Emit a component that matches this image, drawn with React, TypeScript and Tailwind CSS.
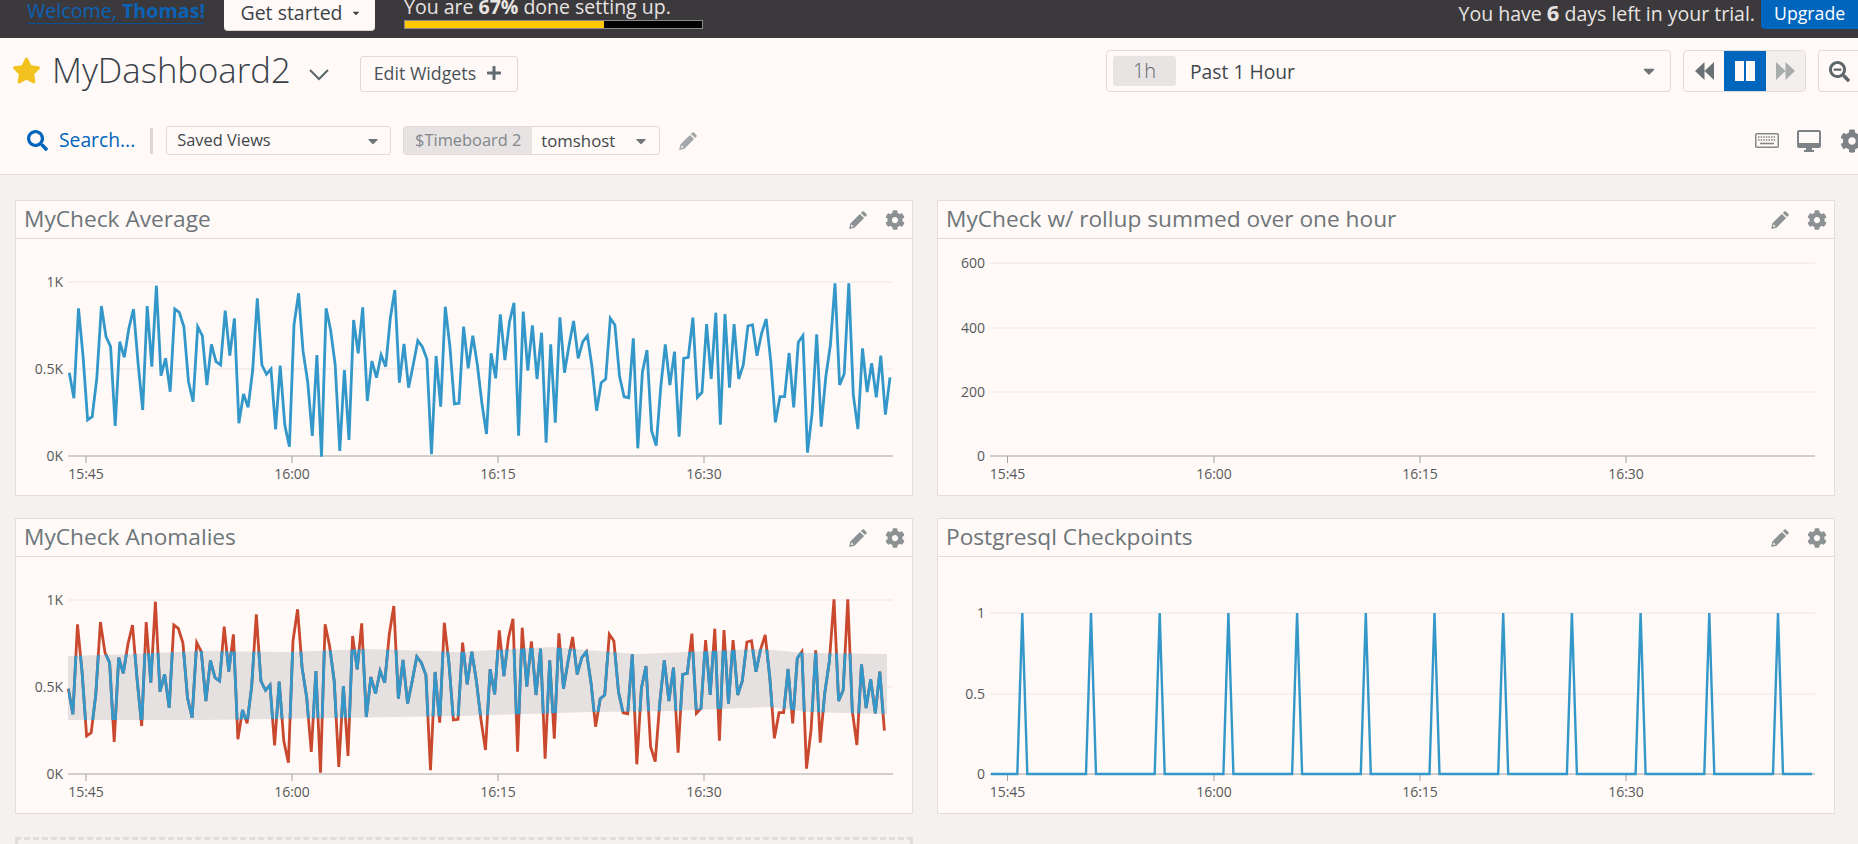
import { FaCaretDown, FaCog, FaPlus, FaSearch, FaSearchMinus, FaStar } from "react-icons/fa";

// y values of the metric, read in thirds of a pixel from the panel top offset
const metric = [
  548, 625, 355, 500, 690, 680, 565, 348, 440, 470, 708, 455, 502, 415, 357, 520, 660, 348, 530, 287, 557, 505, 605,
  357, 367, 410, 575, 635, 410, 437, 585, 463, 515, 525, 362, 497, 385, 700, 612, 652, 540, 325, 525, 553, 537, 718,
  527, 705, 770, 405, 310, 485, 575, 738, 495, 800, 355, 420, 525, 783, 540, 750, 390, 490, 352, 633, 513, 563, 495,
  530, 385, 300, 578, 462, 593, 525, 452, 470, 507, 793, 498, 650, 350, 470, 642, 640, 410, 535, 437, 525, 640, 732,
  490, 565, 373, 510, 395, 338, 737, 365, 542, 406, 567, 428, 758, 463, 698, 382, 548, 465, 393, 505, 455, 437, 530,
  662, 578, 567, 385, 405, 558, 620, 623, 445, 775, 547, 480, 722, 767, 590, 463, 585, 485, 740, 505, 502, 383, 622,
  607, 402, 567, 368, 704, 372, 593, 402, 567, 525, 408, 404, 497, 430, 387, 515, 697, 620, 620, 489, 652, 457, 437,
  788, 670, 433, 710, 560, 465, 280, 585, 552, 280, 615, 717, 475, 606, 520, 622, 497, 674, 562,
];

const bandTop: [number, number][] = [
  [68, 656], [133, 654], [200, 651], [287, 652], [367, 649], [460, 652], [550, 647], [637, 654], [760, 649], [807, 653], [887, 654],
];
const bandBottom: [number, number][] = [
  [887, 714], [807, 712], [770, 707], [743, 708], [673, 711], [593, 712], [460, 716], [200, 720], [68, 720],
];
const bandPoints = [...bandTop, ...bandBottom].map(([x, y]) => `${x},${y}`).join(" ");

function metricPoints(dx: number, dy: number, values: number[]) {
  return values.map((y, i) => `${(69.3 + i * 4.585 + dx).toFixed(1)},${(190 + y / 3 + dy).toFixed(1)}`).join(" ");
}

const spikes = Array.from({ length: 12 }, (_, i) => 1022.3 + i * 68.7);
const spikePoints = [
  "991,774",
  ...spikes.flatMap((x) => [`${x - 5},774`, `${x},613`, `${x + 5},774`]),
  "1812,774",
].join(" ");

function Axis({
  x1,
  x2,
  ticks,
  base,
  grid,
}: {
  x1: number;
  x2: number;
  ticks: number[];
  base: number;
  grid: { y: number; label: string }[];
}) {
  const times = ["15:45", "16:00", "16:15", "16:30"];
  return (
    <g className="text-[14px]" fontFamily="'Open Sans', sans-serif">
      {grid.map((g) => (
        <g key={g.label}>
          <line x1={x1} x2={x2} y1={g.y} y2={g.y} stroke={g.y === base ? "#a3a3a3" : "#ebe6e4"} strokeWidth={1} />
          <text x={x1 - 5} y={g.y + 5} textAnchor="end" fill="#56595b">
            {g.label}
          </text>
        </g>
      ))}
      {ticks.map((x, i) => (
        <g key={x}>
          <line x1={x} x2={x} y1={base} y2={base + 7} stroke="#a3a3a3" />
          <text x={x} y={base + 23} textAnchor="middle" fill="#56595b">
            {times[i]}
          </text>
        </g>
      ))}
    </g>
  );
}

function Pencil({ className }: { className: string }) {
  return (
    <svg viewBox="0 0 20 20" className={className} fill="currentColor">
      <path d="M14.2 1.6a1.2 1.2 0 0 1 1.7 0l2.5 2.5a1.2 1.2 0 0 1 0 1.7l-1.3 1.3-4.2-4.2zM11.9 3.9l4.2 4.2L6.5 17.7l-5.3 1.2 1.1-5.4zM3.6 14.3l-.6 2.7 2.7-.6z" fillRule="evenodd" />
    </svg>
  );
}

function DoubleArrow({ className, flip }: { className: string; flip?: boolean }) {
  return (
    <svg viewBox="0 0 19 18" className={className} fill="currentColor">
      <path d={flip ? "M0 0l9.5 9L0 18zM9.5 0L19 9l-9.5 9z" : "M19 0L9.5 9l9.5 9zM9.5 0L0 9l9.5 9z"} />
    </svg>
  );
}

function Keyboard({ className }: { className: string }) {
  return (
    <svg viewBox="0 0 24 15" className={className}>
      <rect x="0.75" y="0.75" width="22.5" height="13.5" rx="1" fill="none" stroke="currentColor" strokeWidth="1.5" />
      <path d="M3 4h18M3 7h18" stroke="currentColor" strokeWidth="1.6" strokeDasharray="1.6 1" fill="none" />
      <path d="M5 10.5h14" stroke="currentColor" strokeWidth="1.6" fill="none" />
    </svg>
  );
}

function Monitor({ className }: { className: string }) {
  return (
    <svg viewBox="0 0 24 22" className={className} fill="currentColor">
      <path d="M2 0h20a2 2 0 0 1 2 2v14a2 2 0 0 1-2 2h-7v2h2v2H7v-2h2v-2H2a2 2 0 0 1-2-2V2a2 2 0 0 1 2-2zM2 2v11h20V2z" fillRule="evenodd" />
    </svg>
  );
}

function Panel({ title, viewBox, children }: { title: string; viewBox: string; children: React.ReactNode }) {
  return (
    <section className="h-[296px] border border-[#e2dedd] bg-[#fffaf7]">
      <header className="flex h-[38px] items-center justify-between border-b border-[#e0dbdd] pl-[8px] pr-[7px]">
        <h2 className="text-[22.7px] text-[#6d757a]">{title}</h2>
        <div className="flex items-center gap-[17px] text-[#8c9193]">
          <Pencil className="h-[20px] w-[20px]" />
          <FaCog className="h-[20px] w-[20px]" />
        </div>
      </header>
      <svg viewBox={viewBox} className="block h-[256px] w-full">
        {children}
      </svg>
    </section>
  );
}

export default function App() {
  return (
    <div className="h-[844px] w-full overflow-hidden bg-[#f5f1ee] font-['Open_Sans',sans-serif]">
      <div className="flex h-[38px] items-start overflow-hidden bg-[#3b393c] text-[#e8e4e2]">
        <a className="ml-[27px] mt-[-2px] block h-[26px] w-[177px] whitespace-nowrap border-b border-[#0a4f92] text-[19.7px] leading-[26px] text-[#0b62b4]">
          Welcome, <b>Thomas!</b>
        </a>
        <button className="ml-[20px] flex h-[31px] w-[151px] items-center justify-center gap-[8px] rounded-b-[4px] border-b border-[#d8d4d3] bg-[#fffaf7] pb-[4px] pl-[2px] text-[19.5px] text-[#3b4247]">
          Get started
          <FaCaretDown className="h-[10px] w-[10px]" />
        </button>
        <div className="ml-[29px] w-[299px]">
          <p className="mt-[-6px] h-[26px] whitespace-nowrap text-[19.5px] leading-[26px]">
            You are <b>67%</b> done setting up.
          </p>
          <div className="h-[9px] border border-[#8a8a8a] bg-black">
            <div className="h-full w-[67%] bg-[#ffc800]" />
          </div>
        </div>
        <p className="ml-auto mt-[-1px] whitespace-nowrap text-[19.5px] leading-[26px]">
          You have <b className="text-[22px]">6</b> days left in your trial.
        </p>
        <button className="ml-[6px] h-[29px] w-[97px] rounded-bl-[4px] bg-[#0065bd] pb-[4px] pl-[13px] text-left text-[17.7px] text-white">
          Upgrade
        </button>
      </div>

      <div className="h-[137px] border-b border-[#e3dedd] bg-[#fffaf7]">
        <div className="flex h-[54px] items-end">
          <FaStar className="mb-[8px] ml-[12px] h-[27px] w-[29px] text-[#f2c31f]" />
          <h1 className="ml-[11px] whitespace-nowrap text-[34.7px] font-light leading-[44px] text-[#394249]">MyDashboard2</h1>
          <svg viewBox="0 0 20 12" className="mb-[11px] ml-[18px] h-[12px] w-[20px] text-[#59636a]" fill="none" stroke="currentColor" strokeWidth="2">
            <path d="M1 1l9 9 9-9" />
          </svg>
          <button className="ml-[31px] flex h-[36px] w-[158px] items-center gap-[10px] whitespace-nowrap rounded-[3px] border border-[#dedad9] pb-[2px] pl-[13px] text-[17.8px] text-[#4a5257]">
            Edit Widgets
            <FaPlus className="h-[16px] w-[16px] shrink-0 text-[#646b70]" />
          </button>
          <div className="ml-auto flex h-[42px] w-[565px] items-center rounded-[4px] border border-[#e0dbda] pl-[6px] pr-[12px]">
            <span className="flex h-[30px] w-[63px] items-center justify-center rounded-[3px] bg-[#e8e4e3] text-[20px] font-light text-[#5d666b]">
              1h
            </span>
            <span className="ml-[14px] pt-[2px] text-[19.3px] text-[#3f474c]">Past 1 Hour</span>
            <FaCaretDown className="ml-auto h-[18px] w-[18px] text-[#6e7478]" />
          </div>
          <div className="ml-[12px] flex h-[42px] w-[123px] overflow-hidden rounded-[4px] border border-[#e0dbda]">
            <span className="flex w-[40px] items-center justify-center text-[#6b7275]">
              <DoubleArrow className="h-[18px] w-[19px]" />
            </span>
            <span className="flex w-[42px] items-center justify-center gap-[2px] bg-[#0065bd]">
              <span className="h-[20px] w-[9px] bg-[#fffaf7]" />
              <span className="h-[20px] w-[9px] bg-[#fffaf7]" />
            </span>
            <span className="flex flex-1 items-center justify-center bg-[#f3efed] text-[#a9acad]">
              <DoubleArrow flip className="h-[18px] w-[19px]" />
            </span>
          </div>
          <div className="ml-[12px] flex h-[42px] w-[40px] items-center rounded-l-[4px] border border-r-0 border-[#e0dbda] pl-[10px]">
            <FaSearchMinus className="h-[21px] w-[21px] text-[#5d666b]" />
          </div>
        </div>
        <div className="mt-[34px] flex h-[29px] items-center">
          <FaSearch className="ml-[27px] h-[21px] w-[21px] text-[#0065bd]" />
          <span className="ml-[11px] whitespace-nowrap text-[19.3px] text-[#0065bd]">Search...</span>
          <span className="ml-[15px] h-[26px] w-[3px] bg-[#dcd8d7]" />
          <div className="ml-[13px] flex h-[29px] w-[225px] items-center justify-between rounded-[3px] border border-[#e0dbda] pl-[10px] pr-[9px] text-[16.4px] text-[#3f474c]">
            Saved Views
            <FaCaretDown className="h-[16px] w-[16px] text-[#6e7478]" />
          </div>
          <div className="ml-[12px] flex h-[29px] w-[257px] overflow-hidden rounded-[3px] border border-[#e0dbda] text-[16.4px]">
            <span className="flex w-[128px] items-center justify-center whitespace-nowrap bg-[#e7e3e3] text-[#81878a]">$Timeboard 2</span>
            <span className="flex flex-1 items-center justify-between pl-[9px] pr-[10px] text-[16.8px] text-[#3f474c]">
              tomshost
              <FaCaretDown className="h-[16px] w-[16px] text-[#6e7478]" />
            </span>
          </div>
          <Pencil className="ml-[18px] h-[20px] w-[20px] text-[#a3a7a9]" />
          <Keyboard className="ml-auto h-[15px] w-[24px] text-[#85898b]" />
          <Monitor className="ml-[18px] h-[22px] w-[24px] text-[#7c8285]" />
          <FaCog className="ml-[19px] mr-[-6px] h-[24px] w-[24px] shrink-0 text-[#7c8285]" />
        </div>
      </div>

      <main className="grid grid-cols-[898px_898px] gap-x-[24px] gap-y-[22px] pl-[15px] pt-[25px]">
        <Panel title="MyCheck Average" viewBox="16 239 896 256">
          <Axis x1={68} x2={893} base={456} ticks={[86, 292, 498, 704]} grid={[{ y: 282, label: "1K" }, { y: 369, label: "0.5K" }, { y: 456, label: "0K" }]} />
          <polyline points={metricPoints(0, 0, metric)} fill="none" stroke="#3397c9" strokeWidth={2.8} />
        </Panel>
        <Panel title="MyCheck w/ rollup summed over one hour" viewBox="938 239 896 256">
          <Axis x1={990} x2={1815} base={456} ticks={[1007.5, 1214, 1420, 1626]} grid={[{ y: 263, label: "600" }, { y: 328, label: "400" }, { y: 392, label: "200" }, { y: 456, label: "0" }]} />
        </Panel>
        <Panel title="MyCheck Anomalies" viewBox="16 557 896 256">
          <Axis x1={68} x2={893} base={774} ticks={[86, 292, 498, 704]} grid={[{ y: 600, label: "1K" }, { y: 687, label: "0.5K" }, { y: 774, label: "0K" }]} />
          <defs>
            <clipPath id="band">
              <polygon points={bandPoints} />
            </clipPath>
          </defs>
          <polygon points={bandPoints} fill="#e6e1e1" />
          <polyline points={metricPoints(-1, 316, metric.slice(0, -1))} fill="none" stroke="#c9482e" strokeWidth={2.8} />
          <polyline points={metricPoints(-1, 316, metric.slice(0, -1))} fill="none" stroke="#3397c9" strokeWidth={2.8} clipPath="url(#band)" />
        </Panel>
        <Panel title="Postgresql Checkpoints" viewBox="938 557 896 256">
          <Axis x1={990} x2={1815} base={774} ticks={[1007.5, 1214, 1420, 1626]} grid={[{ y: 613, label: "1" }, { y: 694, label: "0.5" }, { y: 774, label: "0" }]} />
          <polyline points={spikePoints} fill="none" stroke="#3397c9" strokeWidth={2.4} />
        </Panel>
      </main>
      <div className="ml-[15px] mt-[23px] h-[10px] w-[898px] border-x-[3px] border-t-[3px] border-dashed border-[#e2dddd]" />
    </div>
  );
}
